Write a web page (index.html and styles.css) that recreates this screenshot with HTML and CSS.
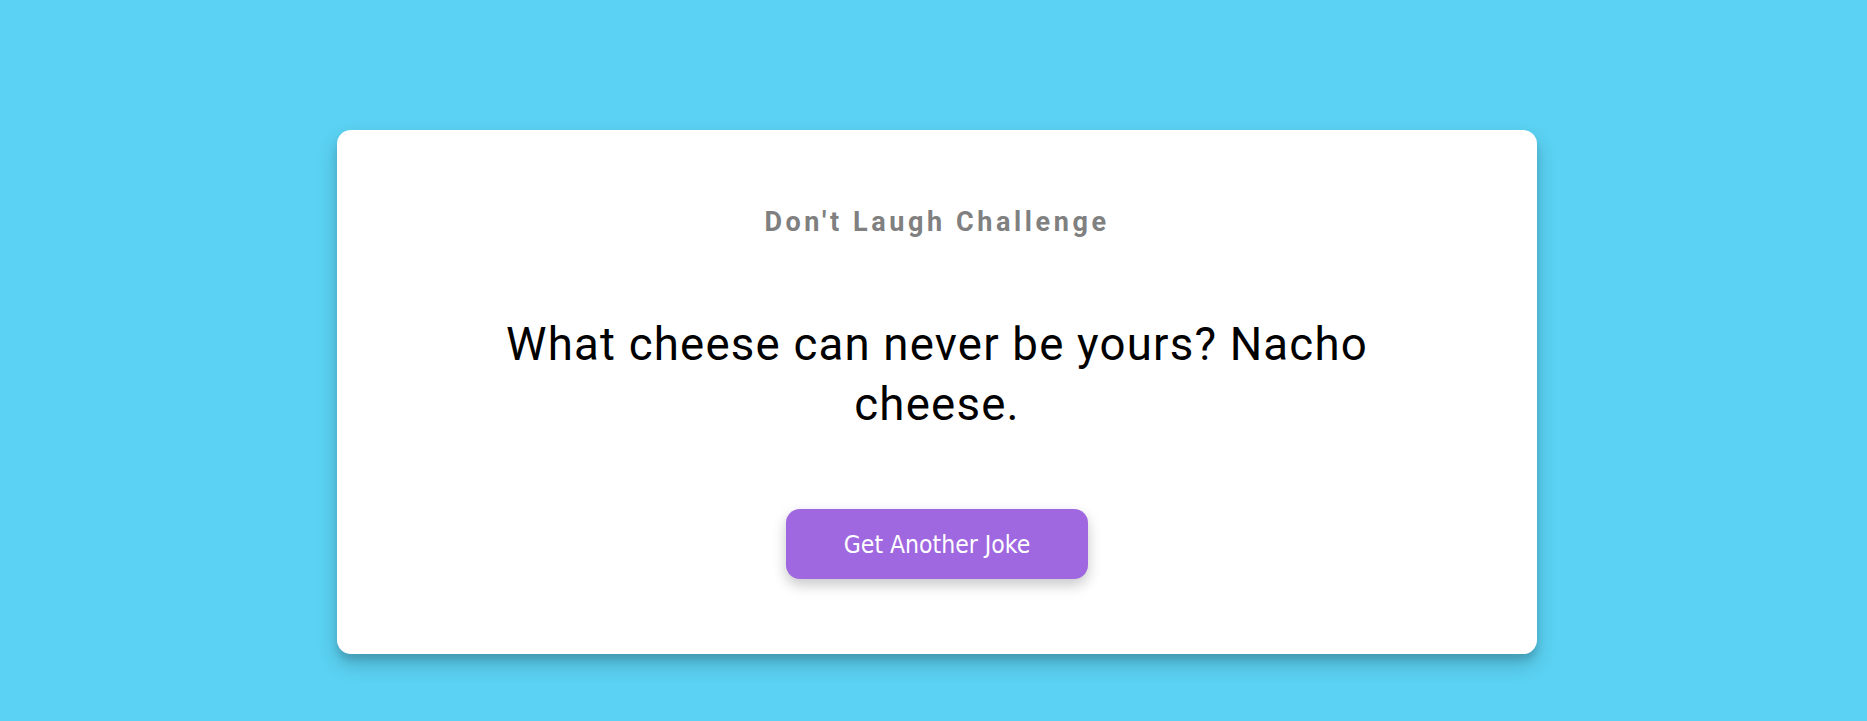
FILE: index.html
```html
<!DOCTYPE html>
<html lang="en">
<head>
<meta charset="utf-8">
<title>Don't Laugh Challenge</title>
<link rel="stylesheet" href="styles.css">
</head>
<body>
<main class="page">
  <section class="card">
    <h3 class="title">Don't Laugh Challenge</h3>
    <p class="joke">What cheese can never be yours? Nacho cheese.</p>
    <button class="btn" type="button">Get Another Joke</button>
  </section>
</main>
</body>
</html>
```

FILE: styles.css
```css
html, body {
  margin: 0;
  padding: 0;
  background: #5bd2f3;
  height: 100%;
}

.page {
  display: flex;
  justify-content: center;
  align-items: flex-start;
  padding: 130px 0 0 7px;
  box-sizing: border-box;
  min-height: 100%;
}

.card {
  width: 1200px;
  box-sizing: border-box;
  background: #ffffff;
  border-radius: 14px;
  box-shadow: 0 10px 20px rgba(0, 0, 0, 0.2), 0 6px 6px rgba(0, 0, 0, 0.1);
  padding: 77px 40px 75px;
  display: flex;
  flex-direction: column;
  align-items: center;
  text-align: center;
}

.title {
  margin: 0;
  font-family: Roboto, "Liberation Sans", sans-serif;
  font-weight: 700;
  font-size: 27px;
  line-height: 31px;
  letter-spacing: 3.6px;
  color: #808080;
}

.joke {
  margin: 77px 0 0;
  max-width: 900px;
  font-family: Roboto, "Liberation Sans", sans-serif;
  font-weight: 400;
  font-size: 45.6px;
  line-height: 60px;
  letter-spacing: 1.2px;
  color: #000000;
}

.btn {
  margin-top: 74px;
  width: 302px;
  height: 70px;
  border: 0;
  border-radius: 14px;
  background: #9f68e0;
  color: #ffffff;
  font-family: "DejaVu Sans Condensed", "DejaVu Sans", sans-serif;
  font-stretch: condensed;
  font-size: 24.5px;
  box-shadow: 0 6px 14px rgba(0, 0, 0, 0.22);
  cursor: pointer;
}
```
